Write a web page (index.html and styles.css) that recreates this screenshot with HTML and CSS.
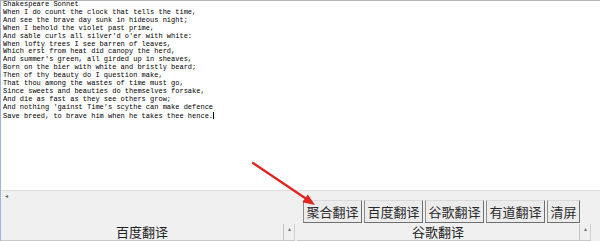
FILE: index.html
```html
<!DOCTYPE html>
<html lang="zh-CN">
<head>
  <meta charset="UTF-8">
  <title>翻译工具</title>
  <link rel="stylesheet" href="styles.css">
</head>
<body>
  <div class="window">
    <div class="editor">
<pre class="source">Shakespeare Sonnet
When I do count the clock that tells the time,
And see the brave day sunk in hideous night;
When I behold the violet past prime,
And sable curls all silver'd o'er with white:
When lofty trees I see barren of leaves,
Which erst from heat did canopy the herd,
And summer's green, all girded up in sheaves,
Born on the bier with white and bristly beard;
Then of thy beauty do I question make,
That thou among the wastes of time must go,
Since sweets and beauties do themselves forsake,
And die as fast as they see others grow;
And nothing 'gainst Time's scythe can make defence
Save breed, to brave him when he takes thee hence.<span class="caret"></span></pre>
    </div>

    <div class="hscroll"><span class="scroll-arrow">◂</span></div>

    <div class="toolbar">
      <button class="btn">聚合翻译</button>
      <button class="btn">百度翻译</button>
      <button class="btn">谷歌翻译</button>
      <button class="btn">有道翻译</button>
      <button class="btn">清屏</button>
    </div>

    <div class="panes">
      <div class="pane">
        <div class="pane-title">百度翻译</div>
        <div class="vscroll"><span class="up">▴</span></div>
      </div>
      <div class="pane">
        <div class="pane-title">谷歌翻译</div>
        <div class="vscroll"><span class="up">▴</span></div>
      </div>
    </div>

    <!-- red annotation arrow -->
    <svg class="arrow" width="600" height="241" viewBox="0 0 600 241">
      <line x1="253" y1="163" x2="305" y2="198" stroke="#e0231f" stroke-width="2.2" stroke-linecap="round"/>
      <polygon points="315,205 302.4,202.2 307.8,194.4" fill="#e0231f"/>
    </svg>
  </div>
</body>
</html>
```

FILE: styles.css
```css
* {
  margin: 0;
  padding: 0;
  box-sizing: border-box;
}

body {
  width: 600px;
  height: 241px;
  overflow: hidden;
  background: #f0f0f0;
  font-family: "Noto Sans CJK SC", sans-serif;
}

.window {
  position: relative;
  width: 600px;
  height: 241px;
  display: flex;
  flex-direction: column;
  border-left: 1px solid #9fb6da;
  background: #f0f0f0;
}

.editor {
  height: 192px;
  background: #fff;
  border-top: 1px solid #b3b3b3;
  border-bottom: 1px solid #dedede;
  padding: 0 0 0 2px;
}

.source {
  font-family: "Liberation Mono", monospace;
  font-size: 7px;
  line-height: 7.9px;
  color: #000;
}

.caret {
  display: inline-block;
  width: 1px;
  height: 7px;
  background: #000;
  vertical-align: -1px;
}

.hscroll {
  height: 9px;
  padding-left: 4px;
  font-size: 6px;
  line-height: 9px;
  color: #666;
}

.toolbar {
  display: flex;
  gap: 2px;
  padding-left: 302px;
  height: 23px;
}

.btn {
  height: 23px;
  padding: 0 2.5px;
  font-family: "Noto Sans CJK SC", sans-serif;
  font-size: 13px;
  line-height: 20px;
  color: #2a2a2a;
  background: #ececec;
  border: 1px solid;
  border-color: #dadada #6f6f6f #6f6f6f #8c8c8c;
}

.panes {
  display: flex;
  gap: 2px;
  padding-top: 1px;
  flex: 1;
}

.pane {
  width: 294px;
  display: flex;
  border-bottom: 1px solid #c8c8c8;
}

.pane-title {
  flex: 1;
  text-align: center;
  font-size: 13px;
  line-height: 16px;
  color: #222;
  border-right: 1px solid #c4c4c4;
}

.vscroll {
  width: 11px;
  text-align: center;
  font-size: 6px;
  line-height: 10px;
  color: #777;
  border-right: 1px solid #d0d0d0;
}

.arrow {
  position: absolute;
  top: 0;
  left: -1px;
  pointer-events: none;
}
```
